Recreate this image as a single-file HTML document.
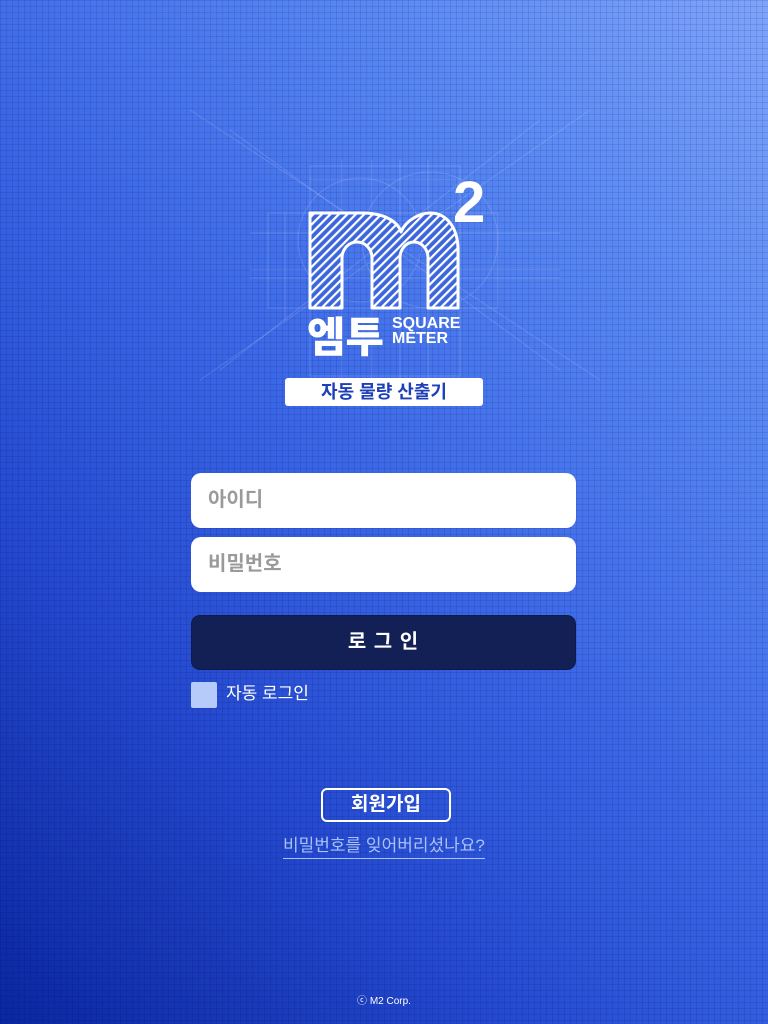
<!DOCTYPE html>
<html><head><meta charset="utf-8">
<style>
*{margin:0;padding:0;box-sizing:border-box}
html,body{width:768px;height:1024px;overflow:hidden}
body{position:relative;font-family:"Liberation Sans","Noto Sans CJK KR",sans-serif;
background:linear-gradient(225deg,#7ea4fa 0%,#5585f2 25%,#3a66e6 50%,#2449cf 72%,#0a27a0 100%);}
.grid{position:absolute;inset:0;
background-image:linear-gradient(rgba(0,0,60,.10) 1px,transparent 1px),linear-gradient(90deg,rgba(0,0,60,.10) 1px,transparent 1px);
background-size:6px 6px}
.abs{position:absolute}
.tag{left:285px;top:378px;width:198px;height:28px;background:#fff;border-radius:3px;color:#1d3fb8;font-weight:bold;font-size:18px;text-align:center;line-height:28px}
.inp{left:191px;width:385px;height:55px;background:#fff;border-radius:10px;color:#9a9a9a;font-weight:bold;font-size:20px;padding-left:17px;line-height:55px}
.btn{left:191px;top:615px;width:385px;height:55px;background:#132055;border-radius:9px;color:#fff;font-weight:bold;font-size:20px;text-align:center;line-height:53px;letter-spacing:1px;border:1px solid #0d1a4a}
.chk{left:191px;top:682px;width:26px;height:26px;background:#b7cbfb;border-radius:2px}
.chkl{left:226px;top:682px;color:#fff;font-size:17px;line-height:24px}
.join{left:321px;top:788px;width:130px;height:34px;border:2px solid #fff;border-radius:6px;color:#fff;font-weight:bold;font-size:19px;text-align:center;line-height:30px}
.forgot{left:283px;top:834px;color:#a9c1f6;font-size:17px;line-height:24px;border-bottom:1px solid #a9c1f6}
.copy{left:0;width:768px;top:992px;text-align:center;color:#fff;font-size:10px}
</style></head><body>
<div class="grid"></div>
<svg class="abs" style="left:0;top:0" width="768" height="440" viewBox="0 0 768 440">
<defs>
<pattern id="h" width="6" height="6" patternUnits="userSpaceOnUse" patternTransform="rotate(45)">
<rect width="6" height="6" fill="#3c66dc"/><rect width="2.2" height="6" fill="#fff"/></pattern>
</defs>
<g stroke="rgba(255,255,255,.14)" stroke-width="1" fill="none">
<line x1="190" y1="110" x2="600" y2="380"/><line x1="590" y1="110" x2="200" y2="380"/>
<line x1="230" y1="130" x2="560" y2="370"/><line x1="540" y1="120" x2="220" y2="370"/>
<circle cx="360" cy="240" r="62"/><circle cx="430" cy="240" r="68"/>
<rect x="310" y="166" width="150" height="210"/><rect x="268" y="213" width="230" height="95"/>
<line x1="250" y1="233" x2="560" y2="233"/><line x1="250" y1="270" x2="560" y2="270"/>
<line x1="250" y1="278" x2="560" y2="278"/><line x1="310" y1="180" x2="460" y2="180"/>
<line x1="342" y1="160" x2="342" y2="380"/><line x1="372" y1="160" x2="372" y2="380"/>
<line x1="400" y1="160" x2="400" y2="380"/><line x1="428" y1="160" x2="428" y2="380"/>
<line x1="285" y1="213" x2="285" y2="320"/>
</g>
<path d="M310 308 V213 H362 C385 213 398 222 401 232 C406 220 420 213 430 213 C447 213 458 228 458 250 V308 H428 V258 A14 16 0 0 0 400 258 V308 H372 V258 A15 16 0 0 0 342 258 V308 Z" fill="url(#h)" stroke="#fff" stroke-width="3" stroke-linejoin="round"/>
<text x="453" y="222" fill="#fff" font-family="Liberation Sans,sans-serif" font-weight="bold" font-size="58">2</text>
<text x="307" y="352" fill="#fff" font-family="Liberation Sans,Noto Sans CJK KR,sans-serif" font-weight="900" font-size="42" textLength="77" lengthAdjust="spacingAndGlyphs">엠투</text>
<text x="392" y="328" fill="#fff" font-family="Liberation Sans,sans-serif" font-weight="bold" font-size="16">SQUARE</text>
<text x="392" y="343" fill="#fff" font-family="Liberation Sans,sans-serif" font-weight="bold" font-size="16">METER</text>
</svg>
<div class="abs tag">자동 물량 산출기</div>
<div class="abs inp" style="top:473px">아이디</div>
<div class="abs inp" style="top:537px">비밀번호</div>
<div class="abs btn">로 그 인</div>
<div class="abs chk"></div>
<div class="abs chkl">자동 로그인</div>
<div class="abs join">회원가입</div>
<div class="abs forgot">비밀번호를 잊어버리셨나요?</div>
<div class="abs copy">ⓒ M2 Corp.</div>
</body></html>
